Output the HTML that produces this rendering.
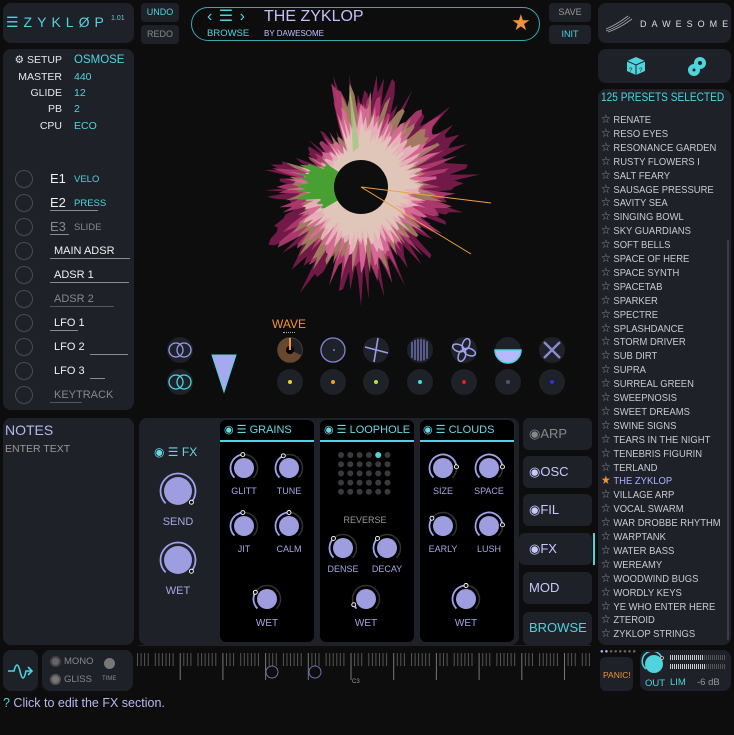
<!DOCTYPE html>
<html><head><meta charset="utf-8">
<style>
*{margin:0;padding:0;box-sizing:border-box}
body{width:734px;height:735px;background:#0d0d0e;font-family:"Liberation Sans",sans-serif;position:relative;overflow:hidden;color:#e8e8ee}
.a{position:absolute}
.p{position:absolute;background:#1e2128;border-radius:8px}
.btn{position:absolute;background:#1e2128;border-radius:4px;font-size:9px;text-align:center;line-height:19px}
.t{color:#4fd4de}
.lv{color:#a6a6e6}
.lbl{position:absolute;font-size:9px;color:#a6a6e6;text-align:center;width:50px}
.pl{position:absolute;left:601px;font-size:10.5px;color:#c9c9d2;white-space:nowrap;transform:scaleX(0.9);transform-origin:0 0}
.pl b{font-weight:normal;color:#9a9aa6;font-size:12px;margin-right:3px}
.sr{position:absolute;font-size:10.5px;text-align:right;width:60px;left:2px}
.sv{position:absolute;font-size:10.5px;left:74px;color:#4fd4de}
.ml{position:absolute;font-size:11px;color:#f0f0f0}
.ul{position:absolute;height:1px;background:#8a8a90}
.tab{position:absolute;background:#1e2128;border-radius:6px;font-size:13px;color:#c8c8ff;padding-left:6px;line-height:31px}
.hdr{position:absolute;font-size:11px;color:#6ad8e2;white-space:nowrap}
</style></head><body>

<!-- logo -->
<div class="p" style="left:3px;top:3px;width:131px;height:40px"></div>
<div class="a t" style="left:6px;top:14px;font-size:14px;letter-spacing:5px">☰ZYKLØP</div>
<div class="a t" style="left:111px;top:15px;font-size:7px">1.01</div>
<div class="btn t" style="left:141px;top:3px;width:38px;height:19px">UNDO</div>
<div class="btn" style="left:141px;top:25px;width:38px;height:19px;color:#888">REDO</div>

<!-- browse pill -->
<div class="a" style="left:191px;top:7px;width:349px;height:34px;border:1.5px solid #3aa8b0;border-radius:17px"></div>
<div class="a t" style="left:207px;top:6px;font-size:16px;letter-spacing:1px">‹ ☰ ›</div>
<div class="a t" style="left:207px;top:28px;font-size:9.5px">BROWSE</div>
<div class="a lv" style="left:264px;top:8px;font-size:16px;color:#c0c0ff">THE ZYKLOP</div>
<div class="a" style="left:264px;top:29px;font-size:8px;color:#c0c0ff">BY DAWESOME</div>
<div class="a" style="left:511px;top:10px;font-size:22px;color:#f0923a">★</div>
<div class="btn" style="left:549px;top:3px;width:42px;height:19px;color:#999">SAVE</div>
<div class="btn t" style="left:549px;top:25px;width:42px;height:19px">INIT</div>

<!-- dawesome -->
<div class="p" style="left:598px;top:3px;width:133px;height:40px"></div>
<svg class="a" style="left:604px;top:15px" width="30" height="18"><path d="M2 16 Q14 12 26 2 M4 17 Q16 13 28 4 M2 14 Q12 10 24 1" stroke="#aaa" fill="none" stroke-width="0.8"/></svg>
<div class="a" style="left:640px;top:19px;font-size:9px;letter-spacing:5px;color:#ddd">DAWESOME</div>
<div class="p" style="left:598px;top:49px;width:133px;height:34px"></div>
<svg class="a" style="left:625px;top:55px" width="22" height="22"><path d="M11 2 L20 6 L20 16 L11 20 L2 16 L2 6 Z" fill="#4fd4de"/><path d="M2 6 L11 10 L20 6 M11 10 L11 20" stroke="#1e2128" fill="none"/><text x="4" y="17" font-size="6" fill="#1e2128">?</text><text x="14" y="17" font-size="6" fill="#1e2128">?</text></svg>
<svg class="a" style="left:686px;top:55px" width="22" height="22"><circle cx="8" cy="15" r="6" fill="#4fd4de"/><circle cx="14" cy="8" r="6" fill="#4fd4de"/><circle cx="14" cy="8" r="2" fill="#1e2128"/><circle cx="8" cy="15" r="1.5" fill="#1e2128"/></svg>

<!-- presets -->
<div class="p" style="left:598px;top:89px;width:133px;height:556px"></div>
<div class="a t" style="left:601px;top:92px;font-size:11.5px;white-space:nowrap;transform:scaleX(0.88);transform-origin:0 0">125 PRESETS SELECTED</div>
<div class="a" style="left:727px;top:240px;width:2px;height:400px;background:#3a3d44;border-radius:1px"></div>
<div id="plist"></div>

<!-- setup -->
<div class="p" style="left:3px;top:49px;width:131px;height:361px"></div>
<div class="sr" style="top:54px">⚙ SETUP</div><div class="sv" style="top:54px;font-size:11.5px">OSMOSE</div>
<div class="sr" style="top:71px">MASTER</div><div class="sv" style="top:71px">440</div>
<div class="sr" style="top:87px">GLIDE</div><div class="sv" style="top:87px">12</div>
<div class="sr" style="top:103px">PB</div><div class="sv" style="top:103px">2</div>
<div class="sr" style="top:120px">CPU</div><div class="sv" style="top:120px">ECO</div>
<div id="modc"></div>
<div class="ml" style="left:50px;top:171px;font-size:13px">E1</div><div class="a t" style="left:74px;top:174px;font-size:9.5px">VELO</div>
<div class="ml" style="left:50px;top:195px;font-size:13px">E2</div><div class="a t" style="left:74px;top:198px;font-size:9.5px">PRESS</div><div class="ul" style="left:50px;top:210px;width:48px"></div>
<div class="ml" style="left:50px;top:219px;font-size:13px;color:#888">E3</div><div class="a" style="left:74px;top:222px;font-size:9.5px;color:#888">SLIDE</div><div class="ul" style="left:50px;top:234px;width:19px"></div>
<div class="ml" style="left:54px;top:245px">MAIN ADSR</div><div class="ul" style="left:50px;top:258px;width:80px"></div>
<div class="ml" style="left:54px;top:269px">ADSR 1</div><div class="ul" style="left:50px;top:282px;width:79px"></div>
<div class="ml" style="left:54px;top:293px;color:#888">ADSR 2</div><div class="ul" style="left:50px;top:306px;width:64px;background:#555"></div>
<div class="ml" style="left:54px;top:317px">LFO 1</div><div class="ul" style="left:50px;top:330px;width:28px"></div>
<div class="ml" style="left:54px;top:341px">LFO 2</div><div class="ul" style="left:90px;top:354px;width:38px"></div>
<div class="ml" style="left:54px;top:365px">LFO 3</div><div class="ul" style="left:90px;top:378px;width:15px"></div>
<div class="ml" style="left:54px;top:389px;color:#888">KEYTRACK</div><div class="ul" style="left:50px;top:402px;width:32px;background:#555"></div>

<!-- visualizer -->
<svg id="viz" class="a" style="left:260px;top:50px" width="250" height="260"></svg>

<!-- wave section -->
<div class="a" style="left:272px;top:317px;font-size:12px;color:#f0923a">WAVE</div>
<div class="a" style="left:283px;top:332px;width:12px;height:2px;border-top:1.5px dotted #aaa"></div>
<svg class="a" style="left:160px;top:330px" width="420" height="75" id="wv"></svg>

<!-- notes -->
<div class="p" style="left:3px;top:418px;width:131px;height:227px"></div>
<div class="a lv" style="left:5px;top:422px;font-size:14px;color:#b8b8f0">NOTES</div>
<div class="a" style="left:5px;top:443px;font-size:10.5px;color:#999">ENTER TEXT</div>

<!-- fx -->
<div class="p" style="left:139px;top:418px;width:380px;height:227px"></div>
<div class="a" style="left:220px;top:420px;width:94px;height:222px;background:#000;border-radius:6px"></div>
<div class="a" style="left:320px;top:420px;width:94px;height:222px;background:#000;border-radius:6px"></div>
<div class="a" style="left:420px;top:420px;width:94px;height:222px;background:#000;border-radius:6px"></div>
<div class="a" style="left:220px;top:440px;width:94px;height:1.5px;background:#4fd4de"></div>
<div class="a" style="left:320px;top:440px;width:94px;height:1.5px;background:#4fd4de"></div>
<div class="a" style="left:420px;top:440px;width:94px;height:1.5px;background:#4fd4de"></div>
<div class="hdr" style="left:224px;top:423px">◉ ☰ GRAINS</div>
<div class="hdr" style="left:324px;top:423px">◉ ☰ LOOPHOLE</div>
<div class="hdr" style="left:423px;top:423px">◉ ☰ CLOUDS</div>
<div class="hdr" style="left:154px;top:445px;font-size:12px">◉ ☰ FX</div>
<svg class="a" style="left:139px;top:418px" width="380" height="227" id="knobs"></svg>
<div class="lbl" style="left:153px;top:516px;font-size:11px">SEND</div>
<div class="lbl" style="left:153px;top:585px;font-size:11px">WET</div>
<div class="lbl" style="left:219px;top:486px">GLITT</div><div class="lbl" style="left:264px;top:486px">TUNE</div>
<div class="lbl" style="left:219px;top:544px">JIT</div><div class="lbl" style="left:264px;top:544px">CALM</div>
<div class="lbl" style="left:242px;top:618px;font-size:10px">WET</div>
<div class="lbl" style="left:340px;top:515px;color:#999">REVERSE</div>
<div class="lbl" style="left:318px;top:564px">DENSE</div><div class="lbl" style="left:362px;top:564px">DECAY</div>
<div class="lbl" style="left:341px;top:618px;font-size:10px">WET</div>
<div class="lbl" style="left:418px;top:486px">SIZE</div><div class="lbl" style="left:464px;top:486px">SPACE</div>
<div class="lbl" style="left:418px;top:544px">EARLY</div><div class="lbl" style="left:464px;top:544px">LUSH</div>
<div class="lbl" style="left:441px;top:618px;font-size:10px">WET</div>

<!-- tabs -->
<div class="tab" style="left:523px;top:418px;width:69px;height:32px;color:#888">◉ARP</div>
<div class="tab" style="left:523px;top:456px;width:69px;height:32px">◉OSC</div>
<div class="tab" style="left:523px;top:494px;width:69px;height:32px">◉FIL</div>
<div class="tab" style="left:519px;top:533px;width:73px;height:32px;padding-left:10px">◉FX</div>
<div class="a" style="left:593px;top:533px;width:2px;height:32px;background:#4fd4de"></div>
<div class="tab" style="left:523px;top:572px;width:69px;height:32px">MOD</div>
<div class="tab t" style="left:523px;top:612px;width:69px;height:33px;color:#4fd4de">BROWSE</div>

<!-- bottom -->
<div class="p" style="left:3px;top:650px;width:35px;height:41px"></div>
<svg class="a" style="left:6px;top:655px" width="30" height="32"><path d="M2 16 L8 16 Q11 4 14 16 Q17 30 20 16 L26 16 M22 12 L26 16 L22 20" stroke="#4fd4de" fill="none" stroke-width="1.6"/></svg>
<div class="p" style="left:42px;top:650px;width:91px;height:41px"></div>
<div class="a" style="left:50px;top:656px;width:11px;height:11px;border-radius:50%;background:#666;border:2px solid #444"></div>
<div class="a" style="left:64px;top:656px;font-size:9.5px;color:#888">MONO</div>
<div class="a" style="left:50px;top:674px;width:11px;height:11px;border-radius:50%;background:#777;border:2px solid #555"></div>
<div class="a" style="left:64px;top:674px;font-size:9.5px;color:#888">GLISS</div>
<div class="a" style="left:104px;top:658px;width:11px;height:11px;border-radius:50%;background:#777"></div>
<div class="a" style="left:102px;top:676px;font-size:6px;color:#888">TIME</div>
<svg class="a" style="left:135px;top:645px" width="460" height="45" id="kb"></svg>

<div class="a" style="left:600px;top:649px;font-size:6px;color:#666;letter-spacing:1px"><span style="color:#b0b0ff">●●</span>●●●●●●</div>
<div class="p" style="left:600px;top:657px;width:33px;height:34px;border-radius:6px"></div>
<div class="a" style="left:603px;top:670px;font-size:8.5px;color:#f0923a">PANIC!</div>
<div class="p" style="left:640px;top:650px;width:91px;height:41px"></div>
<svg class="a" style="left:641px;top:652px" width="90" height="38"><circle cx="13" cy="12" r="9" fill="#4fd4de"/><path d="M5 17 A10 10 0 1 1 21 7" stroke="#4fd4de" fill="none" stroke-width="1.5"/><circle cx="21" cy="6" r="1.5" fill="#222" stroke="#ccc" stroke-width="0.8"/></svg>
<div class="a" style="left:670px;top:655px;width:34px;height:5px;background:repeating-linear-gradient(90deg,#ccc 0 1px,transparent 1px 2px)"></div>
<div class="a" style="left:704px;top:655px;width:21px;height:5px;background:repeating-linear-gradient(90deg,#555 0 1px,transparent 1px 2px)"></div>
<div class="a" style="left:670px;top:664px;width:36px;height:5px;background:repeating-linear-gradient(90deg,#ccc 0 1px,transparent 1px 2px)"></div>
<div class="a" style="left:706px;top:664px;width:19px;height:5px;background:repeating-linear-gradient(90deg,#555 0 1px,transparent 1px 2px)"></div>
<div class="a t" style="left:645px;top:678px;font-size:9.5px">OUT</div>
<div class="a t" style="left:670px;top:677px;font-size:9.5px">LIM</div>
<div class="a" style="left:697px;top:677px;font-size:9.5px;color:#999">-6 dB</div>

<div class="a" style="left:3px;top:696px;font-size:12.5px;color:#b8b8f0"><span class="t">?</span> Click to edit the FX section.</div>

<script>
var names=["RENATE","RESO EYES","RESONANCE GARDEN","RUSTY FLOWERS I","SALT FEARY","SAUSAGE PRESSURE","SAVITY SEA","SINGING BOWL","SKY GUARDIANS","SOFT BELLS","SPACE OF HERE","SPACE SYNTH","SPACETAB","SPARKER","SPECTRE","SPLASHDANCE","STORM DRIVER","SUB DIRT","SUPRA","SURREAL GREEN","SWEEPNOSIS","SWEET DREAMS","SWINE SIGNS","TEARS IN THE NIGHT","TENEBRIS FIGURIN","TERLAND","THE ZYKLOP","VILLAGE ARP","VOCAL SWARM","WAR DROBBE RHYTHM","WARPTANK","WATER BASS","WEREAMY","WOODWIND BUGS","WORDLY KEYS","YE WHO ENTER HERE","ZTEROID","ZYKLOP STRINGS"];
var h="";names.forEach(function(n,i){var s=n=="THE ZYKLOP";h+='<div class="pl" style="top:'+(112+i*13.9)+'px;'+(s?'color:#b0b0ff':'')+'"><b style="'+(s?'color:#f0923a':'')+'">'+(s?'★':'☆')+'</b>'+n+'</div>';});
document.getElementById('plist').innerHTML=h;
var m="";for(var i=0;i<10;i++){m+='<div class="a" style="left:15px;top:'+(170+i*24)+'px;width:18px;height:18px;border-radius:50%;border:1px solid #4a4c52"></div>';}
document.getElementById('modc').innerHTML=m;
// visualizer
var v=document.getElementById('viz'),cx=101,cy=137,s='';var seed=7;function r(){seed=(seed*9301+49297)%233280;return seed/233280;}
function env(deg){ // overall reach by angle (deg, 0=right, clockwise)
  var d=((deg%360)+360)%360;
  var e=60;
  if(d>280&&d<340)e=85; // up-right
  if(d>250&&d<=280)e=95;
  if(d>340||d<20)e=80;
  if(d>=20&&d<70)e=70;
  if(d>=70&&d<150)e=85;
  if(d>=150&&d<200)e=68;
  if(d>=200&&d<250)e=40;
  return e;}
var layers=[['#7a1a4c',1.0],['#b03a70',0.82],['#a08060',0.7],['#d86a98',0.6],['#e8b4bc',0.48],['#e0c8b8',0.36]];
layers.forEach(function(L){var pts=[];for(var a=0;a<360;a+=2){var e=env(a)*L[1];var rr=27+e*(0.45+r()*0.6);if(a%6==0)rr*=1.08;var ang=a*Math.PI/180;pts.push((cx+rr*Math.cos(ang)).toFixed(1)+','+(cy+rr*Math.sin(ang)).toFixed(1));}
s+='<polygon points="'+pts.join(' ')+'" fill="'+L[0]+'" opacity="0.92"/>';});
// green sector on the left
var g=[];g.push(cx+','+cy);for(var a=150;a<=215;a+=2){var rr=35+(a>165&&a<205?30:12)*(0.5+r()*0.6);var ang=a*Math.PI/180;g.push((cx+rr*Math.cos(ang)).toFixed(1)+','+(cy+rr*Math.sin(ang)).toFixed(1));}
s+='<polygon points="'+g.join(' ')+'" fill="#48a032"/>';
s+='<path d="M'+(cx-8)+' '+(cy-35)+' L'+(cx-12)+' '+(cy-105)+' L'+(cx-2)+' '+(cy-40)+'Z" fill="#a0c880" opacity="0.8"/>';
s+='<circle cx="'+cx+'" cy="'+cy+'" r="27" fill="#0e0e0f"/>';
s+='<path d="M'+cx+' '+cy+' L231 153 M'+cx+' '+cy+' L211 204" stroke="#f0a040" stroke-width="1"/>';
v.innerHTML=s;
// wave
var w='';var xs=[130,173,216,260,304,348,392];
w+='<circle cx="20" cy="20" r="13" fill="#1e2128"/><circle cx="16" cy="20" r="7" fill="none" stroke="#9a9aee" stroke-width="1.3"/><circle cx="24" cy="20" r="7" fill="none" stroke="#9a9aee" stroke-width="1.3"/>';
w+='<circle cx="20" cy="52" r="13" fill="#1e2128"/><circle cx="16" cy="52" r="7" fill="none" stroke="#4fd4de" stroke-width="1.3"/><circle cx="24" cy="52" r="7" fill="none" stroke="#4fd4de" stroke-width="1.3"/>';
w+='<path d="M52 25 L76 25 L64 62 Z" fill="#a8a8f0" stroke="#4fd4de" stroke-width="1"/>';
var dc=['#f0d020','#f0a020','#b0e040','#40e0e0','#e02020','#555','#3030e0'];
xs.forEach(function(x,i){w+='<circle cx="'+x+'" cy="20" r="13" fill="#1e2128"/><circle cx="'+x+'" cy="52" r="13" fill="#1e2128"/><circle cx="'+x+'" cy="52" r="2" fill="'+dc[i]+'"/>';});
w+='<circle cx="130" cy="20" r="12" fill="#f0923a" opacity="0.35" stroke="#f0923a" stroke-width="1.3"/><path d="M130 20 L130 8 A12 12 0 0 1 141 25 Z" fill="#1e2128"/><circle cx="130" cy="20" r="4" fill="#000"/><path d="M130 20 L130 8" stroke="#f0923a" stroke-width="2"/>';
w+='<circle cx="173" cy="20" r="12" fill="none" stroke="#8080d0" stroke-width="1.3"/><circle cx="174" cy="20" r="1" fill="#8080d0"/>';
w+='<path d="M205 17 L228 23 M218 8 L214 32" stroke="#9a9aee" stroke-width="1.6"/>';
for(var j=-8;j<=8;j+=3)w+='<path d="M'+(260+j)+' '+(20-Math.sqrt(144-j*j)+1)+' L'+(260+j)+' '+(20+Math.sqrt(144-j*j)-1)+'" stroke="#8888dd" stroke-width="1.1"/>';
w+='<g transform="translate(304 20)" fill="none" stroke="#a0a0f0" stroke-width="1.5"><ellipse cx="0" cy="-6" rx="3.5" ry="6" transform="rotate(20)"/><ellipse cx="0" cy="-6" rx="3.5" ry="6" transform="rotate(110)"/><ellipse cx="0" cy="-6" rx="3.5" ry="6" transform="rotate(200)"/><ellipse cx="0" cy="-6" rx="3.5" ry="6" transform="rotate(290)"/></g>';
w+='<path d="M335 20 L361 20 A13 13 0 0 1 335 20 Z" fill="#b8b8ff" stroke="#4fd4de" stroke-width="1.5"/>';
w+='<path d="M384 12 L400 28 M400 12 L384 28" stroke="#8888cc" stroke-width="2.5"/>';
document.getElementById('wv').innerHTML=w;
// knobs
function knob(x,y,r,ang){var R=r+3.5;var a0=135*Math.PI/180;var a1=(135+ang)*Math.PI/180;
var o='<circle cx="'+x+'" cy="'+y+'" r="'+R+'" fill="none" stroke="#333" stroke-width="1.5" stroke-dasharray="'+(R*2*Math.PI*0.75)+' 100" transform="rotate(135 '+x+' '+y+')"/>';
o+='<path d="M'+(x+R*Math.cos(a0))+' '+(y+R*Math.sin(a0))+' A'+R+' '+R+' 0 '+(ang>180?1:0)+' 1 '+(x+R*Math.cos(a1))+' '+(y+R*Math.sin(a1))+'" stroke="#a0a0f0" stroke-width="1.8" fill="none"/>';
o+='<circle cx="'+x+'" cy="'+y+'" r="'+r+'" fill="#9d9de0"/>';
o+='<circle cx="'+(x+R*Math.cos(a1))+'" cy="'+(y+R*Math.sin(a1))+'" r="2" fill="#111" stroke="#fff" stroke-width="0.9"/>';return o;}
var k='';
k+=knob(39,73,14,265)+knob(39,142,14,265);
k+=knob(105,50,10,130)+knob(150,50,10,110)+knob(105,108,10,130)+knob(150,108,10,135)+knob(128,181,10,75);
k+=knob(204,130,10,90)+knob(248,130,10,90)+knob(227,181,10,20);
k+=knob(304,50,10,220)+knob(350,50,10,220)+knob(304,108,10,80)+knob(350,108,10,220)+knob(327,181,10,135);
for(var rr=0;rr<5;rr++)for(var cc=0;cc<6;cc++){k+='<circle cx="'+(202+cc*9.3)+'" cy="'+(37+rr*9.2)+'" r="3" fill="'+((rr==0&&cc==4)?'#4fd4de':'#3a3a3e')+'"/>';}
document.getElementById('knobs').innerHTML=k;
// keyboard
var b='<rect x="4" y="0" width="452" height="1" fill="#222"/>';
for(var o=0;o<11;o++){var ox=o*42.7;for(var n=0;n<12;n++){if(n==4||n==11)continue;var x=ox+n*3.56+2;if(x>455)break;var long=(n==0&&o>0);b+='<rect x="'+x.toFixed(1)+'" y="8" width="1" height="'+(long?27:13)+'" fill="'+(long?'#777':'#555')+'"/>';}}
b+='<circle cx="137" cy="27" r="6" fill="none" stroke="#7070b0"/><circle cx="180" cy="27" r="6" fill="none" stroke="#7070b0"/>';
b+='<text x="217" y="38" font-size="6" fill="#999" font-family="Liberation Sans">C3</text>';
document.getElementById('kb').innerHTML=b;
</script>
</body></html>
